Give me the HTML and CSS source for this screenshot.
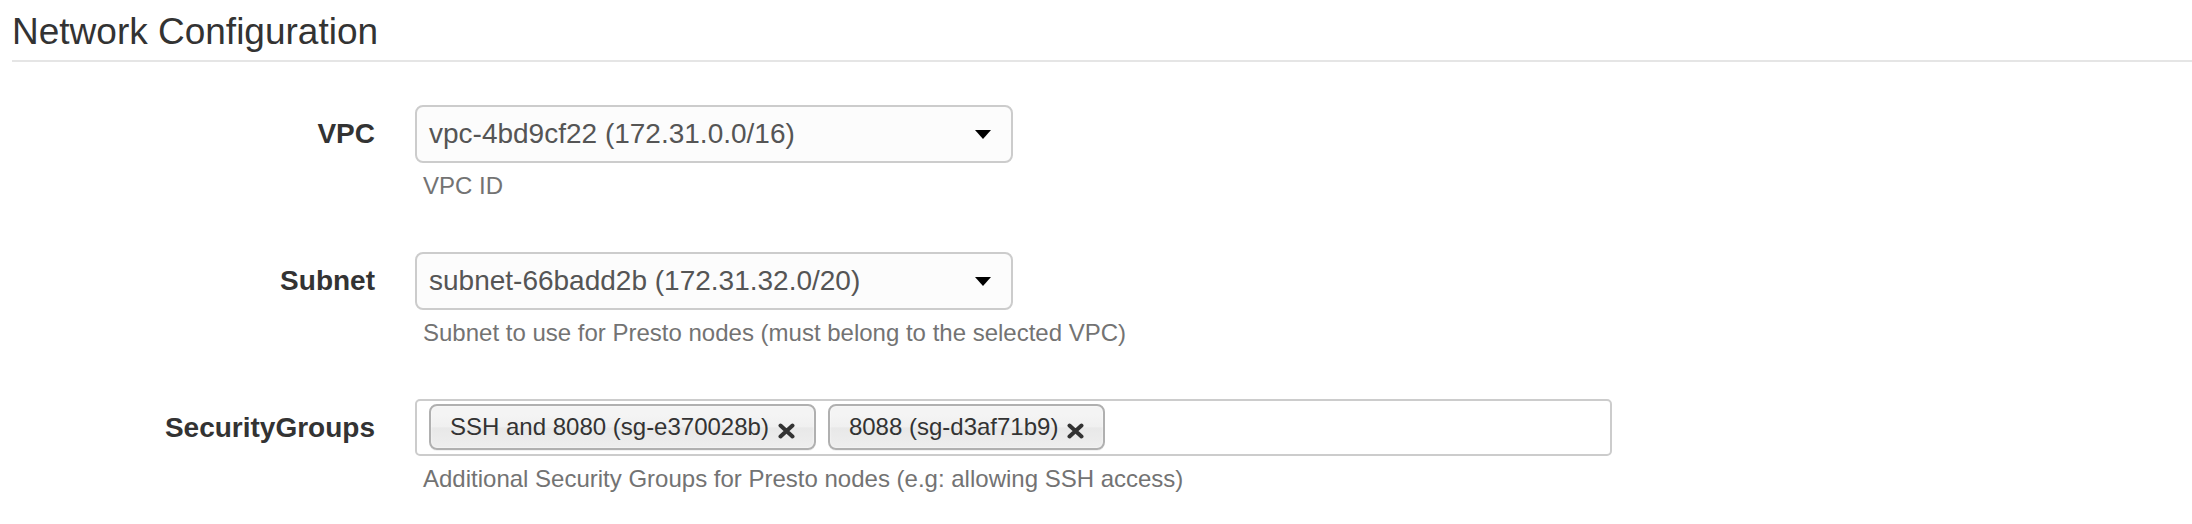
FILE: index.html
```html
<!DOCTYPE html>
<html>
<head>
<meta charset="utf-8">
<title>Network Configuration</title>
<link rel="stylesheet" href="styles.css">
</head>
<body>
<div class="page">
  <h2 class="legend">Network Configuration</h2>
  <div class="form">
    <div class="row">
      <label class="label">VPC</label>
      <div class="control">
        <div class="select">
          <span class="select-text">vpc-4bd9cf22 (172.31.0.0/16)</span>
          <svg class="caret" width="16" height="9" viewBox="0 0 16 9"><path d="M0 0H16L8 9Z" fill="#000"/></svg>
        </div>
        <div class="help">VPC ID</div>
      </div>
    </div>
    <div class="row">
      <label class="label">Subnet</label>
      <div class="control">
        <div class="select">
          <span class="select-text">subnet-66badd2b (172.31.32.0/20)</span>
          <svg class="caret" width="16" height="9" viewBox="0 0 16 9"><path d="M0 0H16L8 9Z" fill="#000"/></svg>
        </div>
        <div class="help">Subnet to use for Presto nodes (must belong to the selected VPC)</div>
      </div>
    </div>
    <div class="row">
      <label class="label">SecurityGroups</label>
      <div class="control">
        <div class="multi">
          <span class="tag">SSH and 8080 (sg-e370028b)<svg class="x" width="17" height="16" viewBox="0 0 17 16"><path d="M2.5 2.5L14.5 13.5M14.5 2.5L2.5 13.5" stroke="#333" stroke-width="4" stroke-linecap="round"/></svg></span>
          <span class="tag">8088 (sg-d3af71b9)<svg class="x" width="17" height="16" viewBox="0 0 17 16"><path d="M2.5 2.5L14.5 13.5M14.5 2.5L2.5 13.5" stroke="#333" stroke-width="4" stroke-linecap="round"/></svg></span>
        </div>
        <div class="help">Additional Security Groups for Presto nodes (e.g: allowing SSH access)</div>
      </div>
    </div>
  </div>
</div>
</body>
</html>
```

FILE: styles.css
```css
html, body {
  margin: 0;
  padding: 0;
  background: #ffffff;
}
body {
  font-family: "Liberation Sans", Arial, Helvetica, sans-serif;
  color: #333333;
}
.page {
  padding-left: 12px;
}
.legend {
  margin: 12px 0 0 0;
  font-size: 37px;
  line-height: 40px;
  font-weight: normal;
  color: #333333;
  padding-bottom: 8px;
  border-bottom: 2px solid #e5e5e5;
}
.form {
  display: flex;
  flex-direction: column;
  gap: 49px;
  margin-top: 43px;
}
.row {
  display: flex;
  gap: 40px;
  align-items: flex-start;
}
.label {
  width: 363px;
  text-align: right;
  font-weight: bold;
  font-size: 28px;
  line-height: 58px;
  color: #333333;
}
.control {
  display: flex;
  flex-direction: column;
  align-items: flex-start;
}
.select {
  box-sizing: border-box;
  width: 598px;
  height: 58px;
  border: 2px solid #cccccc;
  border-radius: 8px;
  background: #fcfcfc;
  display: flex;
  align-items: center;
  justify-content: space-between;
  padding: 0 20px 0 12px;
}
.select-text {
  font-size: 28px;
  color: #555555;
}
.caret {
  display: block;
  flex: none;
}
.help {
  margin-top: 6px;
  padding-left: 8px;
  font-size: 24px;
  line-height: 34px;
  color: #737373;
}
.multi {
  box-sizing: border-box;
  width: 1197px;
  height: 57px;
  border: 2px solid #cccccc;
  border-radius: 5px;
  background: #ffffff;
  display: flex;
  align-items: flex-start;
  gap: 12px;
  padding: 3px 12px 0 12px;
}
.tag {
  box-sizing: border-box;
  height: 46px;
  display: inline-flex;
  align-items: center;
  gap: 9px;
  padding: 0 19px 0 19px;
  border: 2px solid #b0b0b0;
  border-radius: 8px;
  background: linear-gradient(#f4f4f4 20%, #f0f0f0 50%, #e8e8e8 52%, #eeeeee 100%);
  box-shadow: 0 0 2px #ffffff inset, 0 1px 0 rgba(0,0,0,0.05);
  font-size: 24px;
  color: #333333;
}
.x {
  display: block;
  flex: none;
  margin-top: 7px;
}
```
